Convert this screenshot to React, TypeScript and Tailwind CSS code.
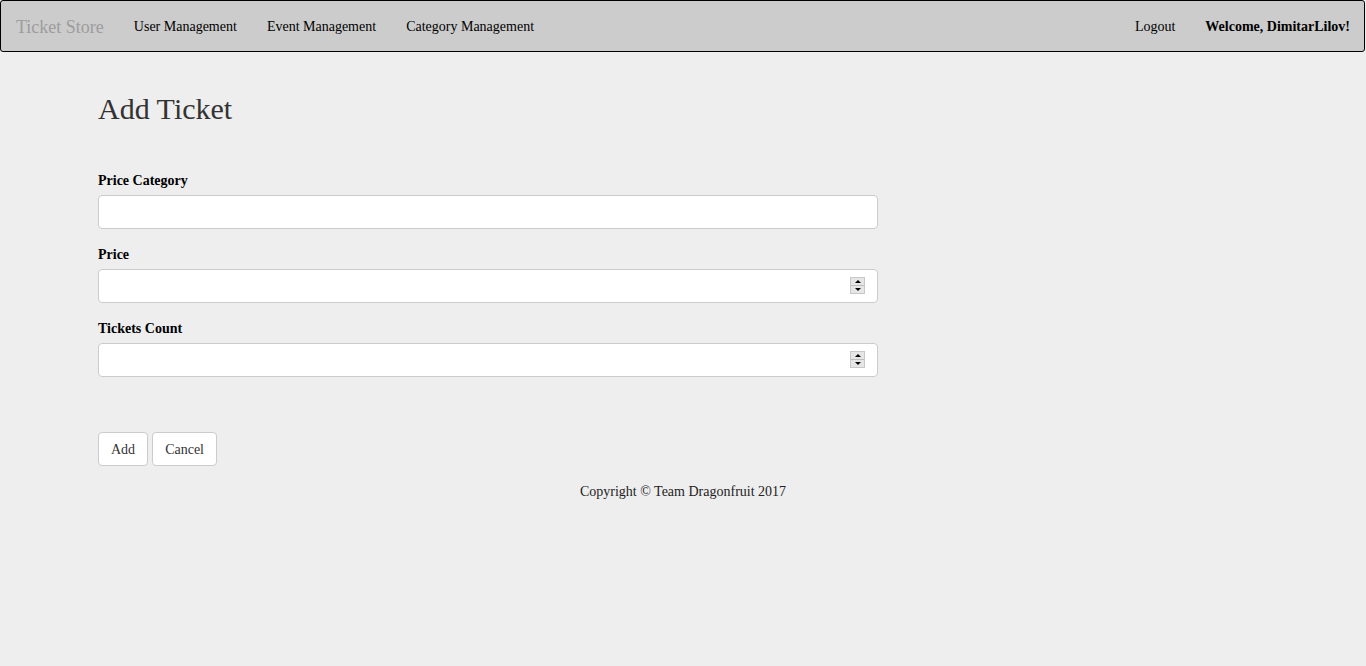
const serif = "font-['Liberation_Serif','Times_New_Roman',serif]";

function Spinner() {
  return (
    <div className="absolute right-[13px] top-[8px] flex h-[17px] w-[15px] flex-col border border-[#c8c8c8] bg-[#e6e6e6]">
      <div className="flex flex-1 items-center justify-center border-b border-[#bdbdbd]">
        <div className="h-0 w-0 border-x-[3px] border-b-[3px] border-x-transparent border-b-black" />
      </div>
      <div className="flex flex-1 items-center justify-center">
        <div className="h-0 w-0 border-x-[3px] border-t-[3px] border-x-transparent border-t-black" />
      </div>
    </div>
  );
}

function Field({ label, number }: { label: string; number?: boolean }) {
  return (
    <div className="mb-[15px]">
      <label className="mb-[4px] block pt-[1px] text-[14px] font-bold leading-[20px] text-black">{label}</label>
      <div className="relative">
        <input
          type="text"
          className="block h-[34px] w-full rounded-[4px] border border-[#ccc] bg-white px-3 text-[14px] outline-none"
        />
        {number && <Spinner />}
      </div>
    </div>
  );
}

export default function App() {
  return (
    <div className={`${serif} min-h-[666px] bg-[#eee] text-[14px] leading-[20px] text-[#333]`}>
      {/* navbar */}
      <nav className="flex h-[52px] w-[1365px] items-center justify-between rounded-[3px] border border-black bg-[#ccc] pt-[2px]">
        <div className="flex items-center">
          <a className="px-[15px] text-[18px] leading-[20px] text-[#9d9d9d]">Ticket Store</a>
          <a className="px-[15px] text-black">User Management</a>
          <a className="px-[15px] text-black">Event Management</a>
          <a className="px-[15px] text-black">Category Management</a>
        </div>
        <div className="flex items-center">
          <a className="px-[15px] text-black">Logout</a>
          <span className="pl-[15px] pr-[14px] font-bold text-black">Welcome, DimitarLilov!</span>
        </div>
      </nav>

      <main className="mx-auto w-[1170px]">
        <h2 className="mt-[40px] text-[30px] leading-[33px] text-[#333]">Add Ticket</h2>
        <form className="mt-[45px] w-[780px]">
          <Field label="Price Category" />
          <Field label="Price" number />
          <Field label="Tickets Count" number />
          <div className="mt-[55px] flex gap-[4px]">
            <button type="button" className="h-[34px] rounded-[4px] border border-[#ccc] bg-white px-[12px] pt-[2px] text-[14px] text-[#333]">Add</button>
            <button type="button" className="h-[34px] rounded-[4px] border border-[#ccc] bg-white px-[12px] pt-[2px] text-[14px] text-[#333]">Cancel</button>
          </div>
        </form>
        <footer className="mt-[16px] text-center text-[#222]">Copyright © Team Dragonfruit 2017</footer>
      </main>
    </div>
  );
}
